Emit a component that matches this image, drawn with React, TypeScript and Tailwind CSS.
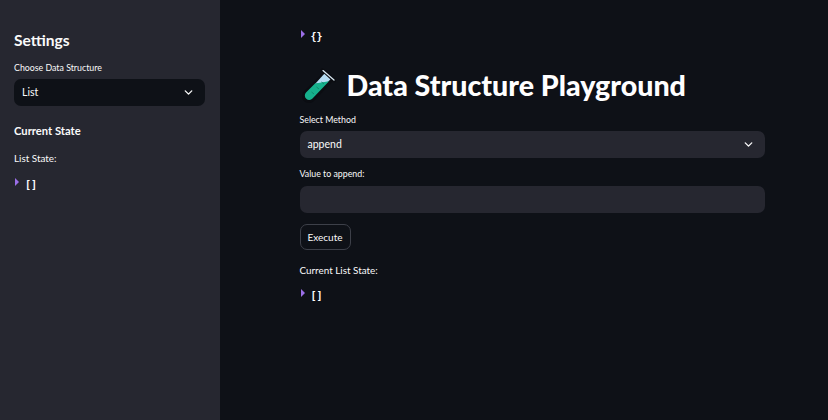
import React from 'react';
import { ChevronDown } from 'lucide-react';

const FONT = "font-['Lato',sans-serif]";

const TestTube = () => (
  <svg width="36" height="36" viewBox="0 0 36 36" className="shrink-0">
    {/* outline */}
    <path d="M25 6 L5 25 A5.4 5.4 0 0 0 13 33 L32 13 Z" fill="#0b0d12" stroke="#0b0d12" strokeWidth="3" strokeLinejoin="round" />
    {/* glass */}
    <path d="M25 6 L30.5 12.5 L27.5 15 L15 17 Z" fill="#b5dcf3" />
    {/* liquid */}
    <path d="M15 16.5 L29 14.2 L12.5 31.5 A4.4 4.4 0 0 1 6 25.5 Z" fill="#16b08c" />
    <path d="M24 17 L21.5 15 M19 22 L16.5 20 M14 27 L11.5 25" stroke="#0f8a6e" strokeWidth="1" />
    <path d="M22.5 3 L34.5 13.5" stroke="#0b0d12" strokeWidth="3.5" strokeLinecap="round" />
    <path d="M23 3.6 L34 13" stroke="#d7e6f0" strokeWidth="1.3" strokeLinecap="round" />
  </svg>
);

const JsonValue = ({ text }: { text: string }) => (
  <div className="flex h-[14px] items-start">
    <span className="mt-[1px] h-0 w-0 border-y-[4px] border-l-[4px] border-y-transparent border-l-[#9b6fe8]" />
    <span className="ml-[6px] mt-[1px] font-['DejaVu_Sans_Mono',monospace] text-[10px] font-bold leading-[14px] text-white">{text}</span>
  </div>
);

const Select = ({ value, className }: { value: string; className: string }) => (
  <div className={`flex h-[27px] items-center justify-between rounded-[7px] pl-2 pr-[10px] text-[10.5px] text-[#fafafa] ${className}`}>
    <span>{value}</span>
    <ChevronDown className="h-[13px] w-[13px]" strokeWidth={2.5} />
  </div>
);

export default function App() {
  return (
    <div className={`flex h-[420px] w-[828px] overflow-hidden bg-[#0e1117] text-[#fafafa] ${FONT}`}>
      {/* 사이드바 */}
      <aside className="flex h-full w-[220px] shrink-0 flex-col bg-[#262730] px-[14px] pt-[30px]">
        <h2 className="text-[15.6px] font-bold leading-[20px]">Settings</h2>
        <label className="mt-[11px] text-[8.8px] leading-[14px]">Choose Data Structure</label>
        <Select value="List" className="mt-[4px] w-[191px] bg-[#0e1117]" />
        <h3 className="mt-[16px] text-[11.2px] font-bold leading-[18px]">Current State</h3>
        <p className="mt-[10px] text-[9.9px] leading-[16px]">List State:</p>
        <div className="ml-[1px] mt-[11px]">
          <JsonValue text="[]" />
        </div>
      </aside>

      {/* 메인 */}
      <main className="flex flex-1 flex-col pl-[79.5px] pt-[29px]">
        <div className="ml-[1px]">
          <JsonValue text="{}" />
        </div>
        <h1 className="mt-[22px] flex h-[40px] items-center gap-[11px] text-[28.6px] font-black leading-[40px] text-white">
          <TestTube />
          <span>Data Structure Playground</span>
        </h1>
        <label className="mt-[8px] text-[8.8px] leading-[14px]">Select Method</label>
        <Select value="append" className="mt-[4px] w-[465px] bg-[#262730]" />
        <label className="mt-[9px] text-[8.8px] leading-[14px]">Value to append:</label>
        <div className="mt-[5px] h-[27px] w-[465px] rounded-[7px] bg-[#262730]" />
        <button className="mt-[11px] h-[26px] w-[51px] rounded-[7px] border border-[#3d4049] text-[10px] text-[#fafafa]">Execute</button>
        <p className="mt-[12px] text-[9.9px] leading-[16px]">Current List State:</p>
        <div className="ml-[1px] mt-[10px]">
          <JsonValue text="[]" />
        </div>
      </main>
    </div>
  );
}
